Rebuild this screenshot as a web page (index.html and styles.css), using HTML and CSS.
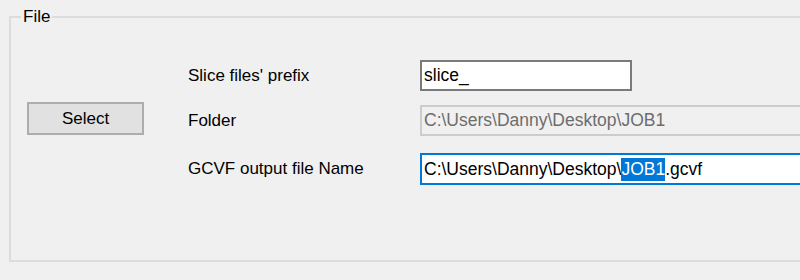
FILE: index.html
```html
<!doctype html>
<html lang="en">
<head>
	<meta charset="utf-8">
	<title>File</title>
	<link rel="stylesheet" href="styles.css">
</head>
<body>
	<fieldset class="group">
		<legend>File</legend>
		<div class="form">
			<div class="label row1">Slice files' prefix</div>
			<div class="textbox row1">slice_</div>

			<button class="select-btn">Select</button>
			<div class="label row2">Folder</div>
			<div class="textbox readonly row2">C:\Users\Danny\Desktop\JOB1</div>

			<div class="label row3">GCVF output file Name</div>
			<div class="textbox focused row3">C:\Users\Danny\Desktop\<span class="sel">JOB1</span>.gcvf</div>
		</div>
	</fieldset>
</body>
</html>
```

FILE: styles.css
```css
* {
	box-sizing: border-box;
}
html, body {
	margin: 0;
	padding: 0;
	width: 800px;
	height: 280px;
	overflow: hidden;
	background-color: #F0F0F0;
	color: #000000;
	font-family: "Liberation Sans", Arial, sans-serif;
	font-size: 17px;
}
.group {
	width: 830px;
	height: 254px;
	margin: 8px 0 0 9px;
	padding: 34px 0 0 10px;
	border: 2px solid #DCDCDC;
}
.group legend {
	padding: 0 2px;
	line-height: 18px;
}
.form {
	display: grid;
	grid-template-columns: 117px 276px 1fr;
	grid-template-rows: 31px 31px 35px;
	row-gap: 14px;
	margin-left: 6px;
}
.form .row1 { grid-row: 1; }
.form .row2 { grid-row: 2; }
.form .row3 { grid-row: 3; align-self: end; height: 32px; }
.label {
	grid-column: 2;
	display: flex;
	align-items: center;
	padding-left: 44px;
}
.textbox {
	grid-column: 3;
	height: 31px;
	display: flex;
	align-items: center;
	padding-left: 2px;
	border: 2px solid #7A7A7A;
	background-color: #FFFFFF;
	font-size: 17.5px;
	white-space: nowrap;
}
.textbox.row1 {
	width: 212px;
}
.textbox.readonly {
	border-color: #CCCCCC;
	background-color: #F0F0F0;
	color: #6D6D6D;
}
.textbox.focused {
	border-color: #0078D7;
}
.sel {
	background-color: #0078D7;
	color: #FFFFFF;
	line-height: 23px;
}
.select-btn {
	grid-column: 1;
	grid-row: 2;
	align-self: start;
	height: 33px;
	margin-top: -3px;
	border: 2px solid #ADADAD;
	background-color: #E1E1E1;
	color: #000000;
	font-family: inherit;
	font-size: 17px;
	padding: 0;
}
```
